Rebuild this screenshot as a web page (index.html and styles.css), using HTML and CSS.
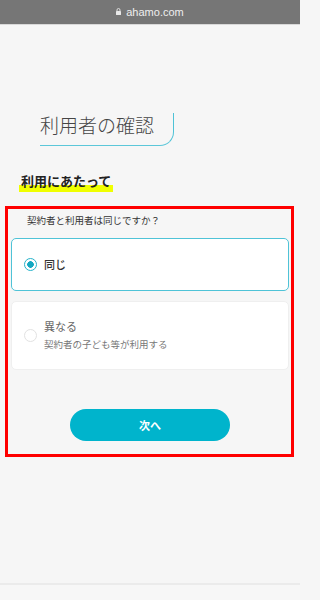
FILE: index.html
```html
<!DOCTYPE html>
<html lang="ja">
<head>
<meta charset="utf-8">
<title>利用者の確認</title>
<link rel="stylesheet" href="styles.css">
</head>
<body>
<div class="urlbar">
  <svg class="lock" width="5" height="7" viewBox="0 0 5 7"><path d="M1 3V2a1.5 1.5 0 0 1 3 0v1" fill="none" stroke="#e8e8e8" stroke-width="0.9"/><rect x="0" y="3" width="5" height="4" rx="0.6" fill="#e8e8e8"/></svg>
  <span>ahamo.com</span>
</div>
<div class="page">
  <h1 class="title">利用者の確認</h1>
  <h2 class="lead">利用にあたって</h2>
  <section class="box">
    <p class="question">契約者と利用者は同じですか？</p>
    <div class="options">
      <label class="option selected">
        <span class="radio on"></span>
        <span class="opt-title strong">同じ</span>
      </label>
      <label class="option tall">
        <span class="radio"></span>
        <span class="opt-text">
          <span class="opt-title muted">異なる</span>
          <span class="opt-sub">契約者の子ども等が利用する</span>
        </span>
      </label>
    </div>
    <button class="next">次へ</button>
  </section>
  <div class="foot"></div>
</div>
</body>
</html>
```
FILE: styles.css
```css
html, body {
  margin: 0;
  padding: 0;
}
html {
  background: #f6f6f6;
}
body {
  background: #f6f6f6;
  font-family: "Noto Sans CJK JP", "Noto Sans", sans-serif;
  width: 300px;
  height: 600px;
  overflow: hidden;
}
.urlbar {
  height: 24px;
  background: #767676;
  border-bottom: 1px solid #d9d9d9;
  display: flex;
  align-items: center;
  justify-content: center;
  gap: 5px;
  color: #eeeeee;
  font-family: "Liberation Sans", Arial, sans-serif;
  font-size: 11px;
}
.lock {
  display: block;
  margin-top: -1px;
}
.page {
  padding-top: 88px;
}
.title {
  margin: 0 0 0 40px;
  width: fit-content;
  padding: 0 19px 8px 0;
  font-size: 19px;
  line-height: 24px;
  font-weight: 300;
  color: #454545;
  border-bottom: 1.5px solid #5cc7d9;
  border-right: 1.5px solid #4ec2d6;
  border-bottom-right-radius: 14px;
}
.lead {
  margin: 28px 0 0 19px;
  width: fit-content;
  padding: 0 2px 4px;
  font-size: 13px;
  line-height: 14px;
  font-weight: 700;
  color: #222;
  background: linear-gradient(to bottom, transparent 11px, #f0ff00 11px);
}
.box {
  margin: 14px 6px 0 5px;
  border: 3px solid #ff0000;
  padding: 5px 2px 13px 3px;
}
.question {
  margin: 0 0 0 16px;
  font-size: 9.5px;
  line-height: 12px;
  color: #333;
}
.options {
  margin-top: 12px;
  display: flex;
  flex-direction: column;
  gap: 10px;
}
.option {
  box-sizing: border-box;
  background: #fff;
  border: 1px solid #efefef;
  border-radius: 5px;
  display: flex;
  align-items: center;
  gap: 7px;
  padding: 0 12px;
  height: 69px;
}
.option.selected {
  height: 53px;
  border-color: #4fc3d7;
}
.radio {
  box-sizing: border-box;
  width: 13px;
  height: 13px;
  border-radius: 50%;
  border: 1px solid #e2e2e2;
  background: #fff;
  flex: none;
}
.radio.on {
  border: 1.5px solid #27b3ca;
  background: radial-gradient(circle at center, #13a8c2 0 3px, #fff 3.6px);
}
.opt-text {
  display: flex;
  flex-direction: column;
  gap: 3px;
  margin-top: -1px;
}
.opt-title {
  font-size: 11px;
  line-height: 15px;
}
.strong {
  font-weight: 500;
  color: #333;
}
.muted {
  color: #666;
}
.opt-sub {
  font-size: 9.5px;
  line-height: 14px;
  color: #777;
}
.next {
  display: block;
  margin: 39px auto 0;
  width: 160px;
  height: 32px;
  border: none;
  border-radius: 16px;
  background: #00b4cc;
  color: #fff;
  font-family: "Noto Sans CJK JP", sans-serif;
  font-size: 11px;
  font-weight: 700;
  padding: 0;
}
.foot {
  margin-top: 126px;
  border-top: 2px solid #ebebeb;
  height: 20px;
  background: #f7f7f7;
}
```
